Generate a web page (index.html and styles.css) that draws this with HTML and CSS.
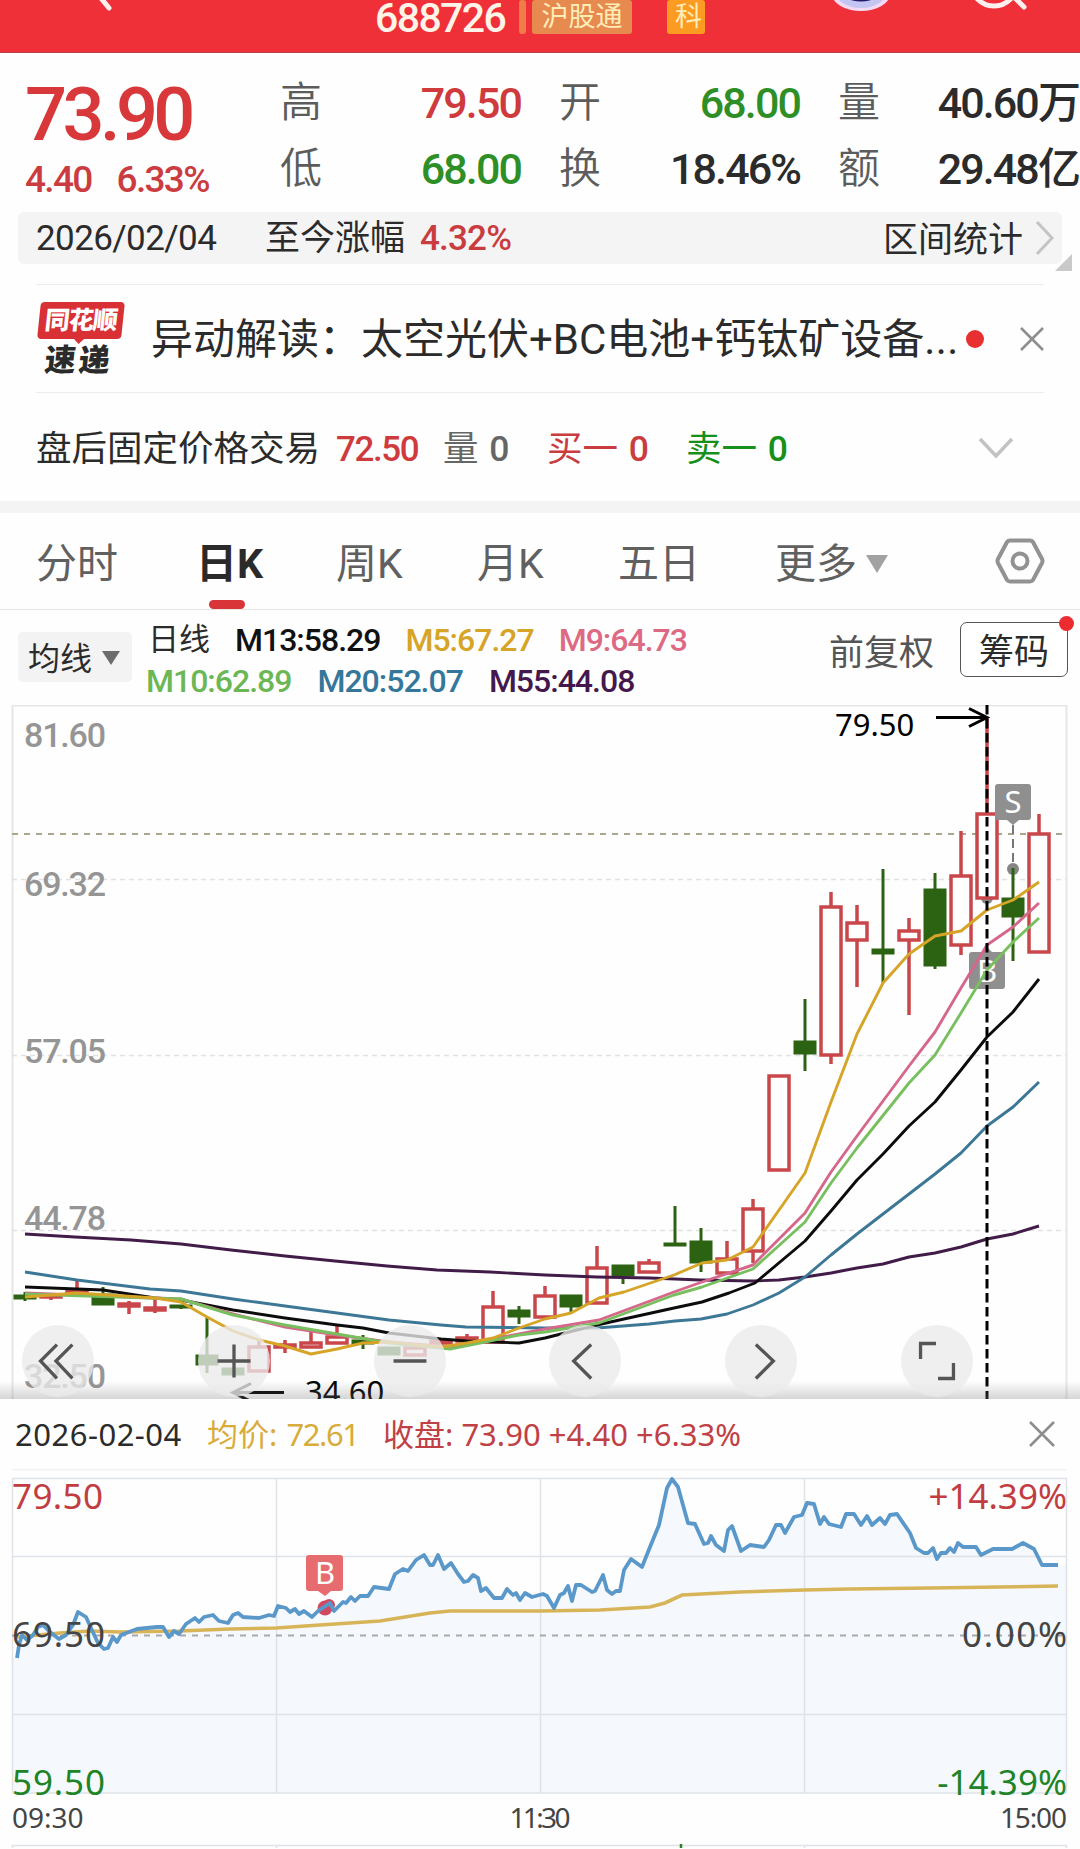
FILE: index.html
```html
<!DOCTYPE html>
<html lang="zh-CN">
<head>
  <meta charset="UTF-8">
  <meta name="viewport" content="width=device-width, initial-scale=1.0">
  <title>688726</title>
  <link rel="stylesheet" href="styles.css">
</head>
<body>
  <!-- Top bar -->
  <header class="topbar">
    <svg class="back-icon" width="40" height="53" viewBox="0 0 40 53"><path d="M16 -8 L29 8" /></svg>
    <div class="stock-title">
      <span class="stock-code">688726</span>
      <span class="tag tag-sliver"></span>
      <span class="tag tag-hgt">沪股通</span>
      <span class="tag tag-kc">科</span>
    </div>
    <div class="top-actions">
      <svg width="60" height="53" viewBox="0 0 60 53">
        <ellipse cx="30" cy="-6" rx="29" ry="17" fill="#f3d9f4" />
        <ellipse cx="30" cy="-9" rx="26" ry="17" fill="#c3c6f2" />
        <ellipse cx="30" cy="-12" rx="22" ry="13.500" fill="#231a6b" />
      </svg>
      <svg width="60" height="53" viewBox="0 0 60 53">
        <circle class="search-line" cx="23" cy="-17" r="23" />
        <path class="search-line" d="M42 -4 L53 7" />
      </svg>
    </div>
  </header>

  <!-- Quote -->
  <section class="quote">
    <div class="price-box">
      <div class="price">73.90</div>
      <div class="change"><span>4.40</span><span>6.33%</span></div>
    </div>
    <div class="stats">
      <div class="stat"><span class="label">高</span><span class="value up">79.50</span></div>
      <div class="stat"><span class="label">开</span><span class="value down">68.00</span></div>
      <div class="stat"><span class="label">量</span><span class="value">40.60万</span></div>
      <div class="stat"><span class="label">低</span><span class="value down">68.00</span></div>
      <div class="stat"><span class="label">换</span><span class="value">18.46%</span></div>
      <div class="stat"><span class="label">额</span><span class="value">29.48亿</span></div>
    </div>
  </section>

  <div class="range-bar">
    <span class="range-date">2026/02/04</span>
    <span class="range-label">至今涨幅</span>
    <span class="range-value">4.32%</span>
    <span class="range-link">区间统计</span>
    <svg class="range-arrow" width="20" height="36" viewBox="0 0 20 36"><path d="M2 2 L17 18 L2 34" /></svg>
    <span class="range-corner"></span>
  </div>

  <!-- News -->
  <section class="news">
    <div class="news-logo">
      <span class="logo-top">同花顺</span>
      <span class="logo-bottom">速递</span>
    </div>
    <p class="news-text">异动解读：太空光伏+BC电池+钙钛矿设备<span>...</span></p>
    <span class="dot"></span>
    <svg class="close-icon" width="24" height="24" viewBox="0 0 24 24"><path d="M1 1 L23 23 M23 1 L1 23" /></svg>
  </section>

  <!-- After-hours fixed price trading -->
  <section class="after-hours">
    <span class="ah-title">盘后固定价格交易</span>
    <span class="ah-price up">72.50</span>
    <span class="ah-vol">量 <b>0</b></span>
    <span class="ah-buy">买一 <b>0</b></span>
    <span class="ah-sell">卖一 <b>0</b></span>
    <svg class="ah-arrow" width="36" height="22" viewBox="0 0 36 22"><path d="M2 2 L18 19 L34 2" /></svg>
  </section>

  <nav class="tabs">
    <a class="tab">分时</a>
    <a class="tab active">日K</a>
    <a class="tab">周K</a>
    <a class="tab">月K</a>
    <a class="tab">五日</a>
    <a class="tab tab-more">更多<i class="caret"></i></a>
    <svg class="settings-icon" width="50" height="48" viewBox="0 0 50 48">
      <path d="M15 3.500 H35 Q37 3.500 38 5 L47 22 Q48 24 47 26 L38 43 Q37 44.500 35 44.500 H15 Q13 44.500 12 43 L3 26 Q2 24 3 22 L12 5 Q13 3.500 15 3.500 Z" />
      <circle cx="25" cy="24" r="7.500" />
    </svg>
  </nav>

  <!-- Moving averages -->
  <section class="ma-bar">
    <button class="ma-select">均线<i class="caret"></i></button>
    <div class="ma-list">
      <div class="ma-row">
        <span class="ma-name">日线</span>
        <span class="m13">M13:58.29</span>
        <span class="m5">M5:67.27</span>
        <span class="m9">M9:64.73</span>
      </div>
      <div class="ma-row">
        <span class="m10">M10:62.89</span>
        <span class="m20">M20:52.07</span>
        <span class="m55">M55:44.08</span>
      </div>
    </div>
    <span class="adjust">前复权</span>
    <button class="chips">筹码<span class="chips-dot"></span></button>
  </section>

  <!-- Daily K chart -->
  <section class="k-chart">
    <svg id="kChart" width="1080" height="694" viewBox="0 705 1080 694">
      <path class="frame" d="M12.500 1399 V705.500 H1066.500 V1399" />
      <path class="grid-dash" d="M12 879.500 H1066 M12 1055.500 H1066 M12 1230.500 H1066" />
      <path class="price-dash" d="M12 834 H1066" />
      <g class="axis-label">
        <text x="24" y="747" textLength="82">81.60</text>
        <text x="24" y="896" textLength="82">69.32</text>
        <text x="24" y="1063" textLength="82">57.05</text>
        <text x="24" y="1230" textLength="82">44.78</text>
        <text x="24" y="1388" textLength="82">32.50</text>
      </g>
      <path class="marker-dash" d="M1013 825 V868" />
      <circle class="marker-dot" cx="1013" cy="869" r="6" />
      <circle class="marker-dot" cx="987" cy="898" r="6" />
      <g id="candles"></g>
      <path class="marker" d="M972 952 H982 L987 947 L992 952 H1002 Q1005 952 1005 955 V986 Q1005 989 1002 989 H972 Q969 989 969 986 V955 Q969 952 972 952 Z" />
      <text class="marker-text" x="987" y="982">B</text>
      <g id="maLines"></g>
      <path class="crosshair" d="M987 705 V1399" />
      <path class="marker" d="M998 784 H1028 Q1031 784 1031 787 V817 Q1031 820 1028 820 H1019 L1013 825 L1007 820 H998 Q995 820 995 817 V787 Q995 784 998 784 Z" />
      <text class="marker-text" x="1013" y="813">S</text>
      <text class="peak-label" x="835" y="735.500">79.50</text>
      <path class="arrow" d="M936 717.500 H986 M969 708.500 L987 717.500 L969 726.500" />
      <text class="peak-label" x="305" y="1402.500">34.60</text>
      <path class="arrow" d="M284 1392.500 H234 M251 1383.500 L233 1392.500 L251 1401.500" />
    </svg>
    <div class="chart-shade"></div>
    <div class="chart-tools">
      <button><svg viewBox="0 0 70 70"><path d="M34 19 L18 35 L34 52 M49 19 L33 35 L49 52" /></svg></button>
      <button><svg viewBox="0 0 70 70"><path d="M35 19 V51 M19 35 H51" /></svg></button>
      <button><svg viewBox="0 0 70 70"><path d="M19 35 H51" /></svg></button>
      <button><svg viewBox="0 0 70 70"><path d="M41 19 L24 35 L41 52" /></svg></button>
      <button><svg viewBox="0 0 70 70"><path d="M30 19 L47 35 L30 52" /></svg></button>
      <button><svg viewBox="0 0 70 70"><path d="M34 18 H19 V33 M36 52 H51 V37" /></svg></button>
    </div>
  </section>

  <!-- Intraday panel -->
  <section class="day-head">
    <span class="day-date">2026-02-04</span>
    <span class="day-avg">均价: <em>72.61</em></span>
    <span class="day-close">收盘: <em>73.90 +4.40 +6.33%</em></span>
    <svg class="close-icon" width="28" height="28" viewBox="0 0 28 28"><path d="M2 2 L26 26 M26 2 L2 26" /></svg>
  </section>

  <svg class="day-chart" width="1080" height="379" viewBox="0 1469 1080 379">
    <path class="top-line" d="M12 1469.500 H1066" />
    <path id="dayFill" class="day-fill" d="" />
    <path class="day-grid" d="M12.500 1478.500 H1066.500 V1793 H12.500 Z M276.500 1478 V1793 M540.500 1478 V1793 M804.500 1478 V1793 M12 1556.500 H1066 M12 1714.500 H1066" />
    <path class="day-grid" d="M12.500 1849 V1845.500 H1066.500 V1849 M276.500 1846 V1849 M804.500 1846 V1849" />
    <path class="vol-tick" d="M681 1844 V1849" />
    <path class="zero-dash" d="M12 1635.500 H1066" />
    <path id="avgLine" class="avg-line" d="" />
    <circle class="buy-dot" cx="325" cy="1608" r="7.500" />
    <circle class="buy-dot" cx="329" cy="1605" r="6" />
    <path id="dayLine" class="day-line" d="" />
    <path class="buy-flag" d="M309 1555 H340 Q343 1555 343 1558 V1588 Q343 1591 340 1591 H331 L325 1596 L318 1591 H309 Q306 1591 306 1588 V1558 Q306 1555 309 1555 Z" />
    <text class="marker-text" x="325" y="1584">B</text>
    <g class="day-label">
      <text class="up" x="12" y="1509" textLength="91">79.50</text>
      <text x="12" y="1647" textLength="93">69.50</text>
      <text class="low" x="12" y="1795" textLength="93">59.50</text>
      <text class="up end" x="1067" y="1509">+14.39%</text>
      <text class="end" x="1067" y="1647" textLength="105">0.00%</text>
      <text class="low end" x="1067" y="1795">-14.39%</text>
    </g>
    <g class="time-label">
      <text x="12" y="1828">09:30</text>
      <text class="mid" x="540" y="1828" textLength="61">11:30</text>
      <text class="end" x="1067" y="1828" textLength="67">15:00</text>
    </g>
  </svg>

  <script src="script.js"></script>
</body>
</html>
```

FILE: styles.css
```css
* {
  margin: 0;
  padding: 0;
  box-sizing: border-box;
}

body {
  width: 1080px;
  height: 1849px;
  overflow: hidden;
  background-color: #fefefe;
  color: #2b2b2b;
  font-family: Roboto, "Noto Sans CJK SC", sans-serif;
  font-size: 35px;
  line-height: 1;
}

svg {
  display: block;
  flex: none;
}

button {
  border: none;
  font: inherit;
  color: inherit;
}

.up {
  color: #cf3a3c;
  fill: #c23d42;
}

.down {
  color: #2f8f27;
}

/* Top bar */
.topbar {
  display: flex;
  height: 53px;
  padding-left: 80px;
  background-color: #f03038;
  border-bottom: 1px solid #c0404c;
}

.back-icon path,
.search-line {
  fill: none;
  stroke: #fff0f0;
  stroke-width: 5;
  stroke-linecap: round;
}

.stock-title {
  display: flex;
  width: 590px;
  padding-left: 255px;
  color: #fff4e8;
}

.stock-code {
  width: 144px;
  font-size: 41px;
  line-height: 36px;
  font-weight: 500;
  letter-spacing: -1.6px;
}

.tag {
  height: 34px;
  border-radius: 3px;
  color: #ffedb8;
  font-size: 27px;
  line-height: 34px;
  text-align: center;
}

.tag-sliver {
  width: 7px;
  margin-right: 6px;
  background-color: #f07c48;
}

.tag-hgt {
  width: 100px;
  margin-right: 35px;
  background-color: #e78a50;
}

.tag-kc {
  width: 38px;
  padding-left: 5px;
  background-color: #fb9b22;
}

.top-actions {
  display: flex;
  margin-left: 121px;
  gap: 80px;
}

/* Quote */
.quote {
  display: flex;
  height: 159px;
  padding-top: 17px;
}

.price-box {
  width: 280px;
  padding-left: 25px;
  color: #d8383a;
}

.price {
  height: 86px;
  font-size: 74px;
  line-height: 90px;
  font-weight: 500;
  letter-spacing: -4.6px;
}

.change {
  display: flex;
  gap: 25px;
  font-size: 37px;
  line-height: 47px;
  letter-spacing: -1.7px;
  font-weight: 500;
  color: #cb3c40;
}

.stats {
  display: grid;
  grid-template-columns: 242px 242px 242px;
  grid-template-rows: 66px 66px;
  column-gap: 37px;
}

.stat {
  display: flex;
  justify-content: space-between;
  align-items: center;
  font-size: 43px;
  font-weight: 500;
  letter-spacing: -1.9px;
  white-space: nowrap;
}

.stat .value {
  margin-right: 1px;
}

.stat .label {
  font-size: 42px;
  font-weight: 350;
  color: #5c5c5c;
  letter-spacing: 0;
}

/* Range bar */
.range-bar {
  position: relative;
  display: flex;
  align-items: center;
  height: 52px;
  margin: 0 18px 20px;
  padding-left: 18px;
  background-color: #f4f4f4;
  border-radius: 6px;
}

.range-date {
  width: 229px;
  letter-spacing: -0.6px;
}

.range-label {
  width: 155px;
}

.range-value {
  width: 463px;
  color: #c93c40;
  font-weight: 500;
  letter-spacing: -0.8px;
}

.range-link {
  width: 152px;
  padding-top: 4px;
}

.range-arrow path {
  fill: none;
  stroke: #c4c4c4;
  stroke-width: 3;
}

.range-corner {
  position: absolute;
  right: -10px;
  bottom: -7px;
  border-left: 17px solid transparent;
  border-bottom: 17px solid #c9c9c9;
}

/* News */
.news {
  display: flex;
  align-items: center;
  height: 109px;
  margin: 0 36px;
  border-top: 1px solid #ececec;
  border-bottom: 1px solid #ececec;
}

.news-logo {
  width: 115px;
  height: 73px;
}

.logo-top {
  position: relative;
  display: block;
  width: 84px;
  height: 37px;
  margin-left: 3px;
  border-radius: 4px;
  background-color: #d93036;
  transform: skewX(-6deg);
  color: #fff;
  font-size: 25px;
  line-height: 37px;
  font-weight: 900;
  letter-spacing: -1px;
  text-align: center;
}

.logo-top::after {
  content: "";
  position: absolute;
  left: 36px;
  top: 36px;
  border: 6px solid transparent;
  border-top-color: #d93036;
  border-bottom: none;
}

.logo-bottom {
  display: block;
  padding: 3px 0 0 9px;
  font-size: 31px;
  line-height: 37px;
  font-weight: 900;
  letter-spacing: 3px;
  transform: skewX(-6deg);
}

.news-text {
  width: 815px;
  padding-top: 3px;
  font-size: 42px;
  white-space: nowrap;
}

.news-text span {
  letter-spacing: 0.5px;
}

.dot {
  width: 18px;
  height: 18px;
  border-radius: 50%;
  background-color: #e93030;
}

.close-icon path {
  fill: none;
  stroke: #8d8d8d;
  stroke-width: 2.500;
}

.news .close-icon {
  margin-left: 36px;
}

/* After hours */
.after-hours {
  display: flex;
  align-items: center;
  height: 120px;
  padding: 5px 0 0 36px;
  border-bottom: 12px solid #f4f4f4;
  font-size: 35.5px;
  white-space: nowrap;
}

.after-hours b {
  font-weight: 500;
  margin-left: 2px;
}

.ah-title {
  width: 300px;
}

.ah-price {
  width: 107px;
  font-size: 35px;
  font-weight: 500;
  letter-spacing: -1.4px;
}

.ah-vol {
  width: 104px;
  color: #666;
}

.ah-buy {
  width: 139px;
  color: #c93c40;
}

.ah-sell {
  width: 292px;
  color: #16901a;
}

.ah-arrow {
  margin-bottom: 4px;
}

.ah-arrow path {
  fill: none;
  stroke: #c2c2c2;
  stroke-width: 3.500;
}

/* Tabs */
.tabs {
  display: flex;
  align-items: center;
  height: 97px;
  padding-left: 36px;
  border-bottom: 1px solid #e4e4e4;
  font-size: 41px;
  color: #606060;
}

.tab {
  position: relative;
  width: 141px;
  height: 96px;
  line-height: 102px;
  white-space: nowrap;
}

.tab:first-child {
  width: 160px;
}

.tab.active {
  width: 140px;
  color: #2a2a2a;
  font-weight: 700;
}

.tab.active::after {
  content: "";
  position: absolute;
  left: 13px;
  bottom: 0;
  width: 36px;
  height: 9px;
  border-radius: 5px;
  background-color: #d93438;
}

.tab:nth-child(5) {
  width: 157px;
}

.tab-more {
  width: 220px;
}

.caret {
  display: inline-block;
  border: 11px solid transparent;
  border-top: 18px solid #a2a2a2;
  border-bottom: none;
  margin-left: 9px;
  vertical-align: 5px;
}

.settings-icon path,
.settings-icon circle {
  fill: none;
  stroke: #929292;
  stroke-width: 4;
}

/* Moving averages */
.ma-bar {
  display: flex;
  height: 95px;
  padding-left: 18px;
}

.ma-select {
  width: 114px;
  height: 50px;
  margin-top: 22px;
  padding: 4px 0 0 10px;
  border-radius: 5px;
  background-color: #f3f3f3;
  font-size: 32px;
  text-align: left;
  white-space: nowrap;
}

.ma-select .caret {
  border-width: 9px;
  border-top: 14px solid #6c6c6c;
  border-bottom: none;
  margin-left: 10px;
  vertical-align: 5px;
}

.ma-list {
  width: 697px;
  padding: 9px 0 0 14px;
  font-size: 32px;
  letter-spacing: -0.75px;
  white-space: nowrap;
}

.ma-row {
  display: flex;
  align-items: center;
  height: 41px;
  gap: 26px;
}

.ma-row:first-child {
  gap: 25px;
}

.ma-name {
  padding-left: 2px;
  font-size: 31px;
  letter-spacing: 0;
}

.ma-row span:not(.ma-name) {
  font-weight: 500;
  letter-spacing: -1px;
}

.m13 { color: #111; }
.m5 { color: #d6a426; }
.m9 { color: #dd6a84; }
.m10 { color: #6cb755; }
.m20 { color: #34779a; }
.m55 { color: #45184d; }

.adjust {
  width: 131px;
  padding-top: 26px;
  color: #555;
}

.chips {
  position: relative;
  width: 108px;
  height: 55px;
  margin-top: 12px;
  padding-top: 5px;
  border: 1.500px solid #555;
  border-radius: 7px;
  background-color: #fff;
  font-size: 35px;
}

.chips-dot {
  position: absolute;
  right: -7px;
  top: -7px;
  width: 15px;
  height: 15px;
  border-radius: 50%;
  background-color: #ed2c32;
}

/* K chart */
.k-chart {
  position: relative;
  height: 694px;
  overflow: hidden;
}

.frame {
  fill: none;
  stroke: #e6e6e6;
  stroke-width: 2;
}

.grid-dash {
  stroke: #e2e2e2;
  stroke-width: 1.500;
  stroke-dasharray: 5 4;
}

.price-dash {
  stroke: #a9a68c;
  stroke-width: 1.800;
  stroke-dasharray: 6 6;
}

.axis-label {
  fill: #959595;
  font-size: 34px;
  font-weight: 500;
}

.candle-up {
  fill: #fefefe;
  stroke: #c9474b;
  stroke-width: 3.500;
}

.candle-down {
  fill: #2c6313;
  stroke: #2c6313;
  stroke-width: 3;
}

.ma-line {
  fill: none;
  stroke-width: 2.900;
  stroke-linejoin: round;
}

.line-m5 { stroke: #d6a426; }
.line-m9 { stroke: #d5688a; }
.line-m10 { stroke: #78bf5f; }
.line-m13 { stroke: #0c0c0c; }
.line-m20 { stroke: #3c7795; }
.line-m55 { stroke: #411c48; }

.crosshair {
  stroke: #000;
  stroke-width: 3;
  stroke-dasharray: 9.500 4.500;
}

.marker {
  fill: #8f8f8f;
}

.marker-dot {
  fill: #858585;
}

.marker-dash {
  stroke: #777;
  stroke-width: 2;
  stroke-dasharray: 9 5;
}

.marker-text {
  fill: #fff;
  font-family: "Noto Sans", sans-serif;
  font-size: 31px;
  text-anchor: middle;
}

.peak-label {
  fill: #000;
  font-family: "Noto Sans", sans-serif;
  font-size: 31px;
}

.arrow {
  fill: none;
  stroke: #000;
  stroke-width: 3;
}

.chart-shade {
  position: absolute;
  left: 0;
  right: 0;
  bottom: 0;
  height: 18px;
  background: linear-gradient(rgba(120, 120, 120, 0), rgba(120, 120, 120, 0.3));
}

.chart-tools {
  position: absolute;
  left: 22px;
  bottom: 2px;
  display: flex;
  justify-content: space-between;
  width: 951px;
}

.chart-tools button {
  width: 72px;
  height: 72px;
  border-radius: 50%;
  background-color: rgba(234, 234, 234, 0.78);
}

.chart-tools path {
  fill: none;
  stroke: #555;
  stroke-width: 3.200;
}

/* Intraday panel */
.day-head {
  display: flex;
  align-items: center;
  height: 70px;
  padding-left: 15px;
  background-color: #fefefe;
  font-family: "Noto Sans", "Noto Sans CJK SC", sans-serif;
  font-size: 31px;
  white-space: nowrap;
}

.day-head em {
  font-style: normal;
}

.day-date {
  width: 192px;
  letter-spacing: 0.5px;
}

.day-avg {
  width: 176px;
  color: #d8ac3a;
}

.day-avg em {
  margin-left: 1px;
  letter-spacing: -1.4px;
}

.day-close {
  width: 645px;
  color: #c04045;
}

.top-line {
  stroke: #f2f2f2;
  stroke-width: 2;
}

.day-fill {
  fill: #f5f9fd;
}

.day-grid {
  fill: none;
  stroke: #dfe3e7;
  stroke-width: 1.500;
}

.zero-dash {
  stroke: #a9a9a9;
  stroke-width: 1.800;
  stroke-dasharray: 6 6;
}

.vol-tick {
  stroke: #2c7d2c;
  stroke-width: 2.500;
}

.day-line {
  fill: none;
  stroke: #5b98ca;
  stroke-width: 3.800;
  stroke-linejoin: round;
}

.avg-line {
  fill: none;
  stroke: #d8b458;
  stroke-width: 3.600;
}

.buy-flag {
  fill: #e76c6f;
}

.buy-dot {
  fill: #cf4a60;
}

.day-label,
.time-label {
  fill: #444;
  font-family: "Noto Sans", sans-serif;
  font-size: 35px;
}

.day-label .low {
  fill: #208427;
}

.time-label {
  font-size: 28px;
}

.end {
  text-anchor: end;
}

.mid {
  text-anchor: middle;
}
```

FILE: script.js
```js
const SVG_NS = "http://www.w3.org/2000/svg";

// type, body top, body bottom, high, low
const candles = [
  ["d", 1296, 1298, 1292, 1301], ["u", 1295, 1297, 1294, 1300], ["u", 1290, 1293, 1280, 1293],
  ["d", 1295, 1304, 1287, 1304], ["u", 1304, 1306, 1301, 1314], ["u", 1308, 1310, 1300, 1313],
  ["d", 1306, 1307, 1305, 1309], ["d", 1356, 1364, 1318, 1373], ["d", 1369, 1374, 1369, 1374],
  ["u", 1347, 1371, 1340, 1371], ["u", 1345, 1347, 1340, 1353], ["u", 1343, 1347, 1330, 1347],
  ["u", 1337, 1343, 1325, 1343], ["d", 1341, 1343, 1335, 1349], ["d", 1348, 1354, 1348, 1354],
  ["u", 1348, 1355, 1348, 1355], ["u", 1341, 1343, 1341, 1343], ["u", 1338, 1341, 1334, 1341],
  ["u", 1307, 1342, 1291, 1342], ["d", 1311, 1316, 1306, 1324], ["u", 1296, 1317, 1286, 1317],
  ["d", 1296, 1306, 1296, 1312], ["u", 1268, 1303, 1246, 1303], ["d", 1266, 1275, 1266, 1284],
  ["u", 1263, 1272, 1259, 1272], ["d", 1244, 1245, 1206, 1245], ["d", 1242, 1262, 1228, 1272],
  ["u", 1259, 1273, 1241, 1273], ["u", 1209, 1251, 1199, 1263], ["u", 1076, 1170, 1076, 1170],
  ["d", 1042, 1053, 999, 1071], ["u", 907, 1055, 892, 1064], ["u", 923, 940, 905, 987],
  ["d", 950, 953, 869, 983], ["u", 931, 940, 918, 1015], ["d", 890, 965, 873, 969],
  ["u", 876, 945, 831, 955], ["u", 814, 898, 718, 898], ["d", 899, 916, 868, 961],
  ["u", 834, 952, 814, 952]
];

const maLines = {
  m55: "25,1234 75,1237 131,1240 181,1244 231,1250 285,1256 335,1261 387,1266 437,1270 490,1272 545,1275 597,1277 650,1278 700,1280 753,1281 779,1280 805,1277 831,1273 857,1268 883,1264 909,1257 935,1253 961,1247 987,1239 1013,1234 1039,1226",
  m20: "25,1272 77,1280 150,1289 181,1291 233,1299 285,1306 337,1313 389,1320 441,1325 466,1327 545,1328 597,1328 649,1324 675,1321 701,1319 727,1314 753,1305 779,1293 805,1277 831,1255 857,1234 909,1194 935,1174 961,1153 987,1126 1013,1107 1039,1082",
  m13: "25,1287 77,1289 103,1290 129,1294 155,1298 181,1300 233,1310 285,1318 337,1325 363,1328 389,1333 441,1339 467,1341 519,1343 545,1338 597,1325 624,1319 674,1308 702,1302 729,1293 755,1283 805,1241 831,1211 857,1180 883,1154 909,1126 935,1102 961,1070 987,1037 1013,1012 1039,979",
  m9: "25,1293 181,1299 233,1314 285,1327 337,1335 389,1342 450,1347 480,1341 519,1334 545,1329 599,1320 674,1292 702,1282 753,1265 805,1213 831,1172 857,1136 909,1066 935,1032 961,988 987,945 1013,927 1039,903",
  m10: "25,1294 181,1299 233,1315 285,1325 337,1334 389,1343 450,1349 480,1343 519,1335 545,1332 599,1323 674,1295 702,1287 753,1269 805,1222 831,1183 857,1148 909,1083 935,1055 961,1013 987,970 1013,942 1039,918",
  m5: "25,1297 77,1293 155,1298 181,1302 207,1317 233,1331 259,1340 285,1346 311,1354 337,1349 363,1343 389,1342 441,1347 467,1343 493,1338 519,1328 545,1319 571,1313 599,1298 624,1292 674,1275 702,1263 727,1260 753,1247 805,1173 831,1102 857,1034 883,983 909,954 935,936 961,931 987,910 1013,900 1039,882"
};

const dayPoints = "17,1658 19,1645 22,1635 27,1640 33,1635 38,1627 43,1625 50,1632 59,1639 66,1635 73,1625 78,1612 86,1617 91,1628 98,1643 104,1649 108,1648 113,1637 117,1642 121,1635 137,1629 157,1627 163,1627 169,1637 174,1631 179,1634 186,1624 195,1618 199,1622 204,1617 213,1615 219,1621 228,1623 233,1615 238,1613 243,1617 259,1618 269,1615 274,1616 278,1606 286,1608 290,1612 295,1609 299,1614 304,1611 312,1617 318,1611 330,1603 334,1611 343,1602 346,1603 351,1597 355,1601 360,1596 368,1596 374,1587 389,1589 395,1574 403,1569 408,1571 416,1560 424,1555 430,1565 433,1565 438,1555 444,1569 451,1563 458,1574 464,1582 468,1581 473,1575 478,1578 481,1591 486,1588 494,1598 502,1598 507,1589 513,1595 516,1593 520,1600 525,1593 532,1597 543,1594 547,1596 554,1608 560,1595 564,1593 568,1586 572,1601 576,1585 581,1585 592,1592 595,1591 603,1575 607,1590 612,1594 616,1591 620,1591 624,1570 631,1559 642,1567 650,1547 659,1525 667,1488 672,1479 678,1487 688,1523 695,1524 704,1544 708,1543 711,1536 716,1545 724,1551 728,1530 732,1526 741,1551 750,1545 764,1547 769,1540 776,1525 781,1525 785,1533 794,1517 802,1515 807,1503 814,1504 820,1524 824,1517 829,1524 841,1527 846,1514 854,1514 861,1525 867,1516 872,1525 880,1518 885,1524 890,1515 897,1514 910,1533 916,1548 924,1553 928,1553 933,1548 937,1559 941,1553 946,1553 950,1548 954,1552 958,1543 963,1547 976,1547 981,1555 993,1549 1012,1549 1023,1543 1034,1549 1042,1565 1058,1565";

const avgPoints = "17,1637 60,1633 90,1631 120,1632 180,1631 230,1629 276,1628 320,1625 380,1621 430,1613 450,1611 540,1611 600,1610 650,1607 665,1603 682,1595 740,1592 804,1590 850,1589 930,1588 1000,1587 1058,1586";

function addPath(parent, d, className) {
  const path = document.createElementNS(SVG_NS, "path");
  path.setAttribute("d", d);
  path.setAttribute("class", className);
  parent.appendChild(path);
}

// Candles are 26px apart, bodies 22px wide
const candleGroup = document.getElementById("candles");
candles.forEach(([type, top, bottom, high, low], i) => {
  const x = 25 + i * 26;
  const d = `M${x} ${high} V${top} M${x} ${bottom} V${low} M${x - 10} ${top} H${x + 10} V${bottom} H${x - 10} Z`;
  addPath(candleGroup, d, type === "u" ? "candle-up" : "candle-down");
});

const maGroup = document.getElementById("maLines");
for (const name in maLines) {
  addPath(maGroup, "M" + maLines[name], "ma-line line-" + name);
}

document.getElementById("dayLine").setAttribute("d", "M" + dayPoints);
document.getElementById("dayFill").setAttribute("d", "M" + dayPoints + " L1066,1565 1066,1793 12,1793 12,1658 Z");
document.getElementById("avgLine").setAttribute("d", "M" + avgPoints);
```
